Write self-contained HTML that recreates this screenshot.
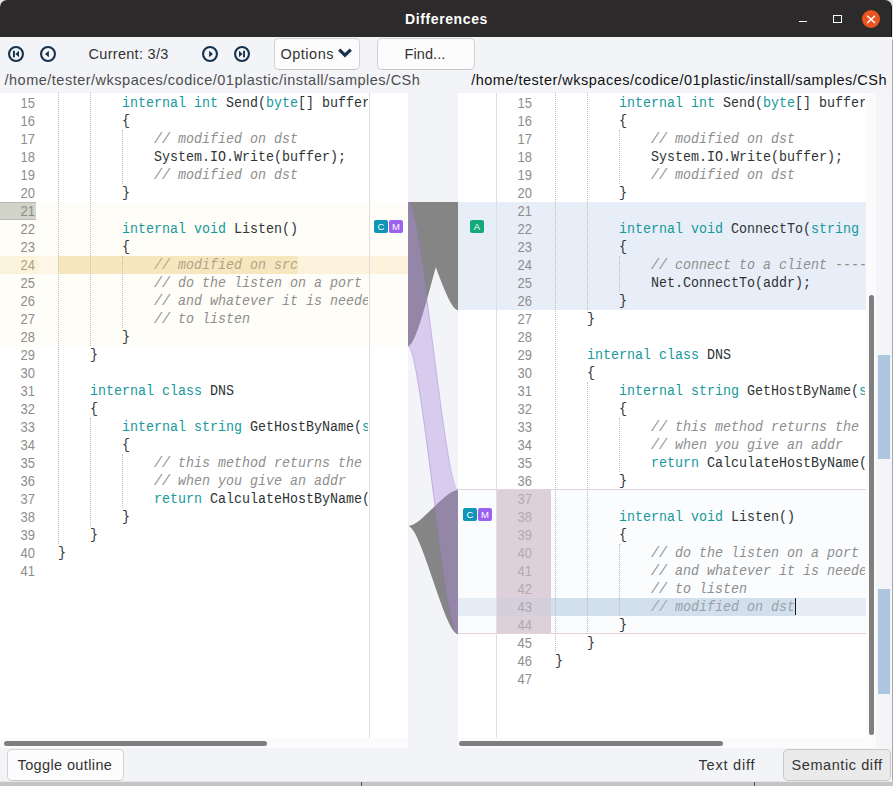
<!DOCTYPE html><html><head><meta charset="utf-8"><style>
*{margin:0;padding:0;box-sizing:border-box}
html,body{width:893px;height:786px;overflow:hidden;background:#c4c4c4}
body{position:relative;font-family:"Liberation Sans",sans-serif}
.a{position:absolute}
.win{position:absolute;left:0;top:0;width:892px;height:781px;background:#f3f4f7;overflow:hidden;border-radius:7px 7px 0 0}
.title{position:absolute;left:0;top:0;width:892px;height:37px;background:#2c2a2a}
.t{position:absolute;white-space:nowrap;font-size:14.5px;line-height:17px;color:#333}
.btn{position:absolute;background:#fcfcfc;border:1px solid #d2d2d2;border-bottom-color:#c4c4c4;border-radius:5px}
.code{position:absolute;font-family:"Liberation Mono",monospace;font-size:14.5px;line-height:18px;white-space:pre;color:#2e3436;transform-origin:0 0;transform:scaleX(0.9195)}
.k{font-weight:normal;color:#16999c}
.c{font-style:italic;color:var(--cc,#8e8e8e)}
.ln{position:absolute;font-family:"Liberation Sans",sans-serif;font-size:14.4px;line-height:18px;color:#8d8d8d;text-align:right;transform-origin:100% 0;transform:scaleX(0.9)}
.dot{position:absolute;width:0;border-left:1px dotted #bcbcbc}
.bdg{position:absolute;width:14px;height:13px;border-radius:2px;color:#fff;font-size:9.5px;line-height:13px;text-align:center}
</style></head><body>
<div class="a" style="left:0;top:0;width:893px;height:40px;background:#e4e4e4"></div>
<div class="a" style="left:0;top:781px;width:893px;height:1px;background:#e6e6e6"></div>
<div class="win">
<div class="title"></div>
<div class="t" style="left:0;width:892px;top:11px;text-align:center;color:#fff;font-weight:bold;font-size:14px;letter-spacing:0.6px;padding-left:1px">Differences</div>
<div class="a" style="left:799px;top:20.5px;width:8px;height:1.6px;background:#fff"></div>
<div class="a" style="left:833px;top:14.5px;width:8.5px;height:8.5px;border:1.3px solid #fff"></div>
<div class="a" style="left:861.8px;top:9.6px;width:18.4px;height:18.4px;border-radius:50%;background:#e95420"></div>
<svg class="a" style="left:861px;top:9px" width="20" height="20"><path d="M6.2 6.7L14 14M14 6.7L6.2 14" stroke="#fff" stroke-width="1.5"/></svg>
<svg class="a" style="left:7px;top:45px" width="18" height="18" viewBox="0 0 18 18"><circle cx="9" cy="9" r="6.95" fill="none" stroke="#17324f" stroke-width="2.1"/><rect x="6" y="5.7" width="1.9" height="6.6" fill="#17324f"/><path d="M12 5.8v6.4l-3.6-3.2z" fill="#17324f"/></svg>
<svg class="a" style="left:39px;top:45px" width="18" height="18" viewBox="0 0 18 18"><circle cx="9" cy="9" r="6.95" fill="none" stroke="#17324f" stroke-width="2.1"/><path d="M9.9 5.8v6.4l-3.9-3.2z" fill="#17324f"/></svg>
<svg class="a" style="left:201px;top:45px" width="18" height="18" viewBox="0 0 18 18"><circle cx="9" cy="9" r="6.95" fill="none" stroke="#17324f" stroke-width="2.1"/><path d="M8.1 5.8v6.4l3.9-3.2z" fill="#17324f"/></svg>
<svg class="a" style="left:233px;top:45px" width="18" height="18" viewBox="0 0 18 18"><circle cx="9" cy="9" r="6.95" fill="none" stroke="#17324f" stroke-width="2.1"/><rect x="10.1" y="5.7" width="1.9" height="6.6" fill="#17324f"/><path d="M6 5.8v6.4l3.6-3.2z" fill="#17324f"/></svg>
<div class="t" style="left:88.5px;top:46.2px;letter-spacing:0.3px">Current: 3/3</div>
<div class="btn" style="left:274px;top:38px;width:86px;height:32px"></div>
<div class="t" style="left:280.5px;top:46.3px;letter-spacing:0.5px">Options</div>
<svg class="a" style="left:336px;top:46px" width="18" height="14"><path d="M3.2 3.6l5.8 5.6 5.8-5.6" fill="none" stroke="#17324f" stroke-width="3.2"/></svg>
<div class="btn" style="left:377px;top:38px;width:98px;height:32px"></div>
<div class="t" style="left:404.5px;top:46.2px;letter-spacing:0.1px">Find...</div>
<div class="a" style="left:0;top:66px;width:421px;height:26px;overflow:hidden"><div class="t" style="left:4.5px;top:5.9px;letter-spacing:0.5px;color:#4d4d4d">/home/tester/wkspaces/codice/01plastic/install/samples/CSharp</div></div>
<div class="a" style="left:466px;top:66px;width:421px;height:26px;overflow:hidden"><div class="t" style="left:5.2px;top:5.9px;letter-spacing:0.5px;color:#111">/home/tester/wkspaces/codice/01plastic/install/samples/CSharp</div></div>
<div class="a" style="left:0;top:93px;width:408px;height:645px;background:#fff;overflow:hidden">
<div class="a" style="left:0;top:109px;width:408px;height:144px;background:#fefdf7"></div>
<div class="a" style="left:0;top:163px;width:39px;height:18px;background:#fcf3dc"></div>
<div class="a" style="left:39px;top:163px;width:19px;height:18px;background:#fdf7e8"></div>
<div class="a" style="left:58px;top:163px;width:240px;height:18px;background:#f7e7bf"></div>
<div class="a" style="left:298px;top:163px;width:110px;height:18px;background:#fdf3dc"></div>
<div class="a" style="left:0;top:109px;width:36px;height:18px;background:#d2d3c9;border-top:1px solid #babbb0;border-bottom:1px solid #babbb0"></div>
<div class="dot" style="left:58px;top:0px;height:451px"></div><div class="dot" style="left:90px;top:0px;height:253px"></div><div class="dot" style="left:90px;top:325px;height:108px"></div><div class="dot" style="left:122px;top:37px;height:54px"></div><div class="dot" style="left:122px;top:163px;height:72px"></div><div class="dot" style="left:122px;top:361px;height:54px"></div>
<div class="a" style="left:369px;top:0;width:1px;height:645px;background:#dedede"></div>
<div class="ln" style="left:0;width:35px;top:1px;color:#8d8d8d">15</div>
<div class="ln" style="left:0;width:35px;top:19px;color:#8d8d8d">16</div>
<div class="ln" style="left:0;width:35px;top:37px;color:#8d8d8d">17</div>
<div class="ln" style="left:0;width:35px;top:55px;color:#8d8d8d">18</div>
<div class="ln" style="left:0;width:35px;top:73px;color:#8d8d8d">19</div>
<div class="ln" style="left:0;width:35px;top:91px;color:#8d8d8d">20</div>
<div class="ln" style="left:0;width:35px;top:109px;color:#8d8d8d">21</div>
<div class="ln" style="left:0;width:35px;top:127px;color:#8d8d8d">22</div>
<div class="ln" style="left:0;width:35px;top:145px;color:#8d8d8d">23</div>
<div class="ln" style="left:0;width:35px;top:163px;color:#aaa08a">24</div>
<div class="ln" style="left:0;width:35px;top:181px;color:#8d8d8d">25</div>
<div class="ln" style="left:0;width:35px;top:199px;color:#8d8d8d">26</div>
<div class="ln" style="left:0;width:35px;top:217px;color:#8d8d8d">27</div>
<div class="ln" style="left:0;width:35px;top:235px;color:#8d8d8d">28</div>
<div class="ln" style="left:0;width:35px;top:253px;color:#8d8d8d">29</div>
<div class="ln" style="left:0;width:35px;top:271px;color:#8d8d8d">30</div>
<div class="ln" style="left:0;width:35px;top:289px;color:#8d8d8d">31</div>
<div class="ln" style="left:0;width:35px;top:307px;color:#8d8d8d">32</div>
<div class="ln" style="left:0;width:35px;top:325px;color:#8d8d8d">33</div>
<div class="ln" style="left:0;width:35px;top:343px;color:#8d8d8d">34</div>
<div class="ln" style="left:0;width:35px;top:361px;color:#8d8d8d">35</div>
<div class="ln" style="left:0;width:35px;top:379px;color:#8d8d8d">36</div>
<div class="ln" style="left:0;width:35px;top:397px;color:#8d8d8d">37</div>
<div class="ln" style="left:0;width:35px;top:415px;color:#8d8d8d">38</div>
<div class="ln" style="left:0;width:35px;top:433px;color:#8d8d8d">39</div>
<div class="ln" style="left:0;width:35px;top:451px;color:#8d8d8d">40</div>
<div class="ln" style="left:0;width:35px;top:469px;color:#8d8d8d">41</div>
<div class="code" style="left:58px;top:1px;width:337px;overflow:hidden">        <b class="k">internal</b> <b class="k">int</b> Send(<b class="k">byte</b>[] buffer</div>
<div class="code" style="left:58px;top:19px;width:337px;overflow:hidden">        {</div>
<div class="code" style="left:58px;top:37px;width:337px;overflow:hidden">            <i class="c">// modified on dst</i></div>
<div class="code" style="left:58px;top:55px;width:337px;overflow:hidden">            System.IO.Write(buffer);</div>
<div class="code" style="left:58px;top:73px;width:337px;overflow:hidden">            <i class="c">// modified on dst</i></div>
<div class="code" style="left:58px;top:91px;width:337px;overflow:hidden">        }</div>
<div class="code" style="left:58px;top:109px;width:337px;overflow:hidden"></div>
<div class="code" style="left:58px;top:127px;width:337px;overflow:hidden">        <b class="k">internal</b> <b class="k">void</b> Listen()</div>
<div class="code" style="left:58px;top:145px;width:337px;overflow:hidden">        {</div>
<div class="code" style="left:58px;top:163px;width:337px;overflow:hidden;--cc:#b0a58a">            <i class="c">// modified on src</i></div>
<div class="code" style="left:58px;top:181px;width:337px;overflow:hidden">            <i class="c">// do the listen on a port</i></div>
<div class="code" style="left:58px;top:199px;width:337px;overflow:hidden">            <i class="c">// and whatever it is needed</i></div>
<div class="code" style="left:58px;top:217px;width:337px;overflow:hidden">            <i class="c">// to listen</i></div>
<div class="code" style="left:58px;top:235px;width:337px;overflow:hidden">        }</div>
<div class="code" style="left:58px;top:253px;width:337px;overflow:hidden">    }</div>
<div class="code" style="left:58px;top:271px;width:337px;overflow:hidden"></div>
<div class="code" style="left:58px;top:289px;width:337px;overflow:hidden">    <b class="k">internal</b> <b class="k">class</b> DNS</div>
<div class="code" style="left:58px;top:307px;width:337px;overflow:hidden">    {</div>
<div class="code" style="left:58px;top:325px;width:337px;overflow:hidden">        <b class="k">internal</b> <b class="k">string</b> GetHostByName(<b class="k">string</b></div>
<div class="code" style="left:58px;top:343px;width:337px;overflow:hidden">        {</div>
<div class="code" style="left:58px;top:361px;width:337px;overflow:hidden">            <i class="c">// this method returns the</i></div>
<div class="code" style="left:58px;top:379px;width:337px;overflow:hidden">            <i class="c">// when you give an addr</i></div>
<div class="code" style="left:58px;top:397px;width:337px;overflow:hidden">            <b class="k">return</b> CalculateHostByName(</div>
<div class="code" style="left:58px;top:415px;width:337px;overflow:hidden">        }</div>
<div class="code" style="left:58px;top:433px;width:337px;overflow:hidden">    }</div>
<div class="code" style="left:58px;top:451px;width:337px;overflow:hidden">}</div>
<div class="code" style="left:58px;top:469px;width:337px;overflow:hidden"></div>
<div class="a" style="left:369px;top:0;width:39px;height:645px;background:transparent"></div>
<div class="bdg" style="left:374px;top:127px;background:#0f95b8">C</div>
<div class="bdg" style="left:389px;top:127px;background:#9c60f2">M</div>
</div>
<div class="a" style="left:0;top:738px;width:408px;height:10px;background:#fbfbfb"></div>
<div class="a" style="left:4px;top:741px;width:263px;height:5px;border-radius:3px;background:#7f7f7f"></div>
<div class="a" style="left:458px;top:93px;width:408px;height:645px;background:#fff;overflow:hidden">
<div class="a" style="left:0;top:109px;width:408px;height:108px;background:#e8eef7"></div>
<div class="a" style="left:0;top:397px;width:408px;height:144px;background:#fbfcfe"></div>
<div class="a" style="left:38px;top:397px;width:55px;height:144px;background:#ddd0d8"></div>
<div class="a" style="left:0;top:396px;width:408px;height:1px;background:#e5d3dc"></div>
<div class="a" style="left:0;top:540px;width:408px;height:1px;background:#e5d3dc"></div>
<div class="a" style="left:0;top:505px;width:38px;height:18px;background:#e5ecf5"></div>
<div class="a" style="left:38px;top:505px;width:55px;height:18px;background:#d5cfdb"></div>
<div class="a" style="left:93px;top:505px;width:245px;height:18px;background:#d2dfec"></div>
<div class="a" style="left:338px;top:505px;width:70px;height:18px;background:#e5ecf5"></div>
<div class="a" style="left:38px;top:0;width:1px;height:645px;background:#dcdfe5"></div>
<div class="dot" style="left:97px;top:0px;height:559px"></div><div class="dot" style="left:129px;top:0px;height:217px"></div><div class="dot" style="left:129px;top:289px;height:252px"></div><div class="dot" style="left:161px;top:37px;height:54px"></div><div class="dot" style="left:161px;top:163px;height:36px"></div><div class="dot" style="left:161px;top:325px;height:54px"></div><div class="dot" style="left:161px;top:451px;height:72px"></div>
<div class="ln" style="left:39px;width:35px;top:1px;color:#8d8d8d">15</div>
<div class="ln" style="left:39px;width:35px;top:19px;color:#8d8d8d">16</div>
<div class="ln" style="left:39px;width:35px;top:37px;color:#8d8d8d">17</div>
<div class="ln" style="left:39px;width:35px;top:55px;color:#8d8d8d">18</div>
<div class="ln" style="left:39px;width:35px;top:73px;color:#8d8d8d">19</div>
<div class="ln" style="left:39px;width:35px;top:91px;color:#8d8d8d">20</div>
<div class="ln" style="left:39px;width:35px;top:109px;color:#8d8d8d">21</div>
<div class="ln" style="left:39px;width:35px;top:127px;color:#8d8d8d">22</div>
<div class="ln" style="left:39px;width:35px;top:145px;color:#8d8d8d">23</div>
<div class="ln" style="left:39px;width:35px;top:163px;color:#8d8d8d">24</div>
<div class="ln" style="left:39px;width:35px;top:181px;color:#8d8d8d">25</div>
<div class="ln" style="left:39px;width:35px;top:199px;color:#8d8d8d">26</div>
<div class="ln" style="left:39px;width:35px;top:217px;color:#8d8d8d">27</div>
<div class="ln" style="left:39px;width:35px;top:235px;color:#8d8d8d">28</div>
<div class="ln" style="left:39px;width:35px;top:253px;color:#8d8d8d">29</div>
<div class="ln" style="left:39px;width:35px;top:271px;color:#8d8d8d">30</div>
<div class="ln" style="left:39px;width:35px;top:289px;color:#8d8d8d">31</div>
<div class="ln" style="left:39px;width:35px;top:307px;color:#8d8d8d">32</div>
<div class="ln" style="left:39px;width:35px;top:325px;color:#8d8d8d">33</div>
<div class="ln" style="left:39px;width:35px;top:343px;color:#8d8d8d">34</div>
<div class="ln" style="left:39px;width:35px;top:361px;color:#8d8d8d">35</div>
<div class="ln" style="left:39px;width:35px;top:379px;color:#8d8d8d">36</div>
<div class="ln" style="left:39px;width:35px;top:397px;color:#b3a9af">37</div>
<div class="ln" style="left:39px;width:35px;top:415px;color:#b3a9af">38</div>
<div class="ln" style="left:39px;width:35px;top:433px;color:#b3a9af">39</div>
<div class="ln" style="left:39px;width:35px;top:451px;color:#b3a9af">40</div>
<div class="ln" style="left:39px;width:35px;top:469px;color:#b3a9af">41</div>
<div class="ln" style="left:39px;width:35px;top:487px;color:#b3a9af">42</div>
<div class="ln" style="left:39px;width:35px;top:505px;color:#aca6b4">43</div>
<div class="ln" style="left:39px;width:35px;top:523px;color:#b3a9af">44</div>
<div class="ln" style="left:39px;width:35px;top:541px;color:#8d8d8d">45</div>
<div class="ln" style="left:39px;width:35px;top:559px;color:#8d8d8d">46</div>
<div class="ln" style="left:39px;width:35px;top:577px;color:#8d8d8d">47</div>
<div class="code" style="left:97px;top:1px;width:337px;overflow:hidden">        <b class="k">internal</b> <b class="k">int</b> Send(<b class="k">byte</b>[] buffer</div>
<div class="code" style="left:97px;top:19px;width:337px;overflow:hidden">        {</div>
<div class="code" style="left:97px;top:37px;width:337px;overflow:hidden">            <i class="c">// modified on dst</i></div>
<div class="code" style="left:97px;top:55px;width:337px;overflow:hidden">            System.IO.Write(buffer);</div>
<div class="code" style="left:97px;top:73px;width:337px;overflow:hidden">            <i class="c">// modified on dst</i></div>
<div class="code" style="left:97px;top:91px;width:337px;overflow:hidden">        }</div>
<div class="code" style="left:97px;top:109px;width:337px;overflow:hidden"></div>
<div class="code" style="left:97px;top:127px;width:337px;overflow:hidden">        <b class="k">internal</b> <b class="k">void</b> ConnectTo(<b class="k">string</b></div>
<div class="code" style="left:97px;top:145px;width:337px;overflow:hidden">        {</div>
<div class="code" style="left:97px;top:163px;width:337px;overflow:hidden">            <i class="c">// connect to a client -------</i></div>
<div class="code" style="left:97px;top:181px;width:337px;overflow:hidden">            Net.ConnectTo(addr);</div>
<div class="code" style="left:97px;top:199px;width:337px;overflow:hidden">        }</div>
<div class="code" style="left:97px;top:217px;width:337px;overflow:hidden">    }</div>
<div class="code" style="left:97px;top:235px;width:337px;overflow:hidden"></div>
<div class="code" style="left:97px;top:253px;width:337px;overflow:hidden">    <b class="k">internal</b> <b class="k">class</b> DNS</div>
<div class="code" style="left:97px;top:271px;width:337px;overflow:hidden">    {</div>
<div class="code" style="left:97px;top:289px;width:337px;overflow:hidden">        <b class="k">internal</b> <b class="k">string</b> GetHostByName(<b class="k">string</b></div>
<div class="code" style="left:97px;top:307px;width:337px;overflow:hidden">        {</div>
<div class="code" style="left:97px;top:325px;width:337px;overflow:hidden">            <i class="c">// this method returns the</i></div>
<div class="code" style="left:97px;top:343px;width:337px;overflow:hidden">            <i class="c">// when you give an addr</i></div>
<div class="code" style="left:97px;top:361px;width:337px;overflow:hidden">            <b class="k">return</b> CalculateHostByName(</div>
<div class="code" style="left:97px;top:379px;width:337px;overflow:hidden">        }</div>
<div class="code" style="left:97px;top:397px;width:337px;overflow:hidden"></div>
<div class="code" style="left:97px;top:415px;width:337px;overflow:hidden">        <b class="k">internal</b> <b class="k">void</b> Listen()</div>
<div class="code" style="left:97px;top:433px;width:337px;overflow:hidden">        {</div>
<div class="code" style="left:97px;top:451px;width:337px;overflow:hidden">            <i class="c">// do the listen on a port</i></div>
<div class="code" style="left:97px;top:469px;width:337px;overflow:hidden">            <i class="c">// and whatever it is needed</i></div>
<div class="code" style="left:97px;top:487px;width:337px;overflow:hidden">            <i class="c">// to listen</i></div>
<div class="code" style="left:97px;top:505px;width:337px;overflow:hidden;--cc:#9aa0a8">            <i class="c">// modified on dst</i></div>
<div class="code" style="left:97px;top:523px;width:337px;overflow:hidden">        }</div>
<div class="code" style="left:97px;top:541px;width:337px;overflow:hidden">    }</div>
<div class="code" style="left:97px;top:559px;width:337px;overflow:hidden">}</div>
<div class="code" style="left:97px;top:577px;width:337px;overflow:hidden"></div>
<div class="a" style="left:337.0px;top:505px;width:1.2px;height:17px;background:#1a1a1a"></div>
<div class="bdg" style="left:12px;top:127px;background:#14a979">A</div>
<div class="bdg" style="left:5px;top:415px;background:#0f95b8">C</div>
<div class="bdg" style="left:20px;top:415px;background:#9c60f2">M</div>
</div>
<div class="a" style="left:458px;top:738px;width:408px;height:10px;background:#fbfbfb"></div>
<div class="a" style="left:459px;top:741px;width:264px;height:5px;border-radius:3px;background:#7f7f7f"></div>
<div class="a" style="left:866px;top:93px;width:10px;height:655px;background:#fbfbfb"></div>
<div class="a" style="left:869px;top:295px;width:5px;height:440px;border-radius:3px;background:#7f7f7f"></div>
<div class="a" style="left:876px;top:93px;width:15px;height:655px;background:#f4f5f7"></div>
<div class="a" style="left:878px;top:355px;width:12px;height:104px;background:#adc6e0"></div>
<div class="a" style="left:878px;top:589px;width:12px;height:105px;background:#adc6e0"></div>
<svg class="a" style="left:408px;top:93px" width="50" height="655" viewBox="408 93 50 655">
<path d="M408 202 C421 202 445 202 458 202 L458 209 C445 209 421 346 408 346 Z" fill="#858585"/>
<path d="M408 202 C421 202 445 202 458 202 L458 310 C445 310 421 209 408 209 Z" fill="#858585"/>
<path d="M408 526 C421 526 445 490 458 490 L458 634 C445 634 421 526 408 526 Z" fill="#858585"/>
<path d="M408 202 C421 202 445 490 458 490 L458 634 C445 634 421 346 408 346 Z" fill="rgba(172,135,222,0.37)" stroke="rgba(165,125,225,0.45)" stroke-width="1.1"/>
</svg>
<div class="btn" style="left:7px;top:749px;width:117px;height:32px"></div>
<div class="t" style="left:17.5px;top:757.2px;letter-spacing:0.38px">Toggle outline</div>
<div class="t" style="left:698.5px;top:757.1px;letter-spacing:0.8px">Text diff</div>
<div class="btn" style="left:783px;top:749px;width:108px;height:32px;background:#eaeaeb;border-color:#c8c8c8"></div>
<div class="t" style="left:791.5px;top:757.2px;letter-spacing:0.58px">Semantic diff</div>
</div>
<div class="a" style="left:892px;top:40px;width:1px;height:741px;background:#a8a8a8"></div>
<div class="a" style="left:891px;top:6px;width:1px;height:31px;background:#111"></div>
<div class="a" style="left:361px;top:782px;width:1px;height:4px;background:#555"></div><div class="a" style="left:754px;top:782px;width:1px;height:4px;background:#555"></div>
</body></html>
